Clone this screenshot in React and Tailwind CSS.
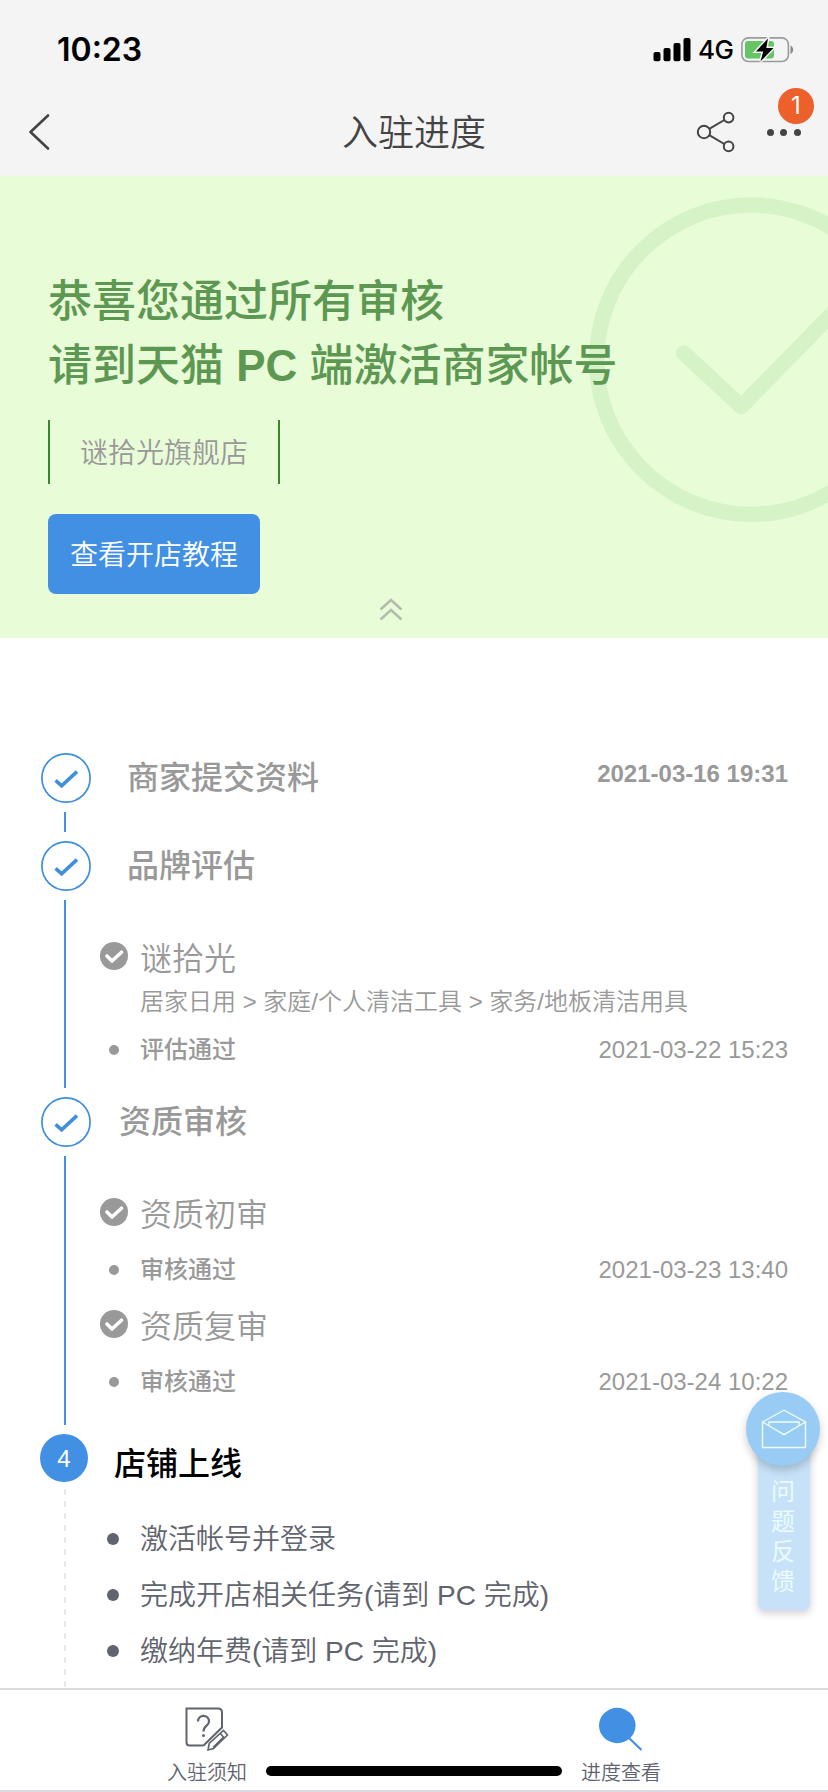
import React from 'react';

const TODO_ITEMS = ['激活帐号并登录', '完成开店相关任务(请到 PC 完成)', '缴纳年费(请到 PC 完成)'];

function StatusBar() {
    return (
        <div className="flex h-[88px] items-center justify-between pl-[57px] pr-[33px] text-black font-['Inter',sans-serif]">
            <span className="mt-[12px] text-[32px] font-semibold leading-none">10:23</span>
            <div className="mt-[11px] flex items-center">
                <svg width="38" height="24" viewBox="0 0 38 24">
                    <rect x="0.500" y="14" width="7" height="9.3" rx="2" />
                    <rect x="10.500" y="10" width="7" height="13.3" rx="2" />
                    <rect x="20.500" y="5" width="7" height="18.3" rx="2" />
                    <rect x="30.500" y="0" width="7" height="23.3" rx="2" />
                </svg>
                <span className="ml-[7px] w-[36px] text-[26px] font-medium leading-none tracking-[-0.5px]">4G</span>
                <svg className="ml-[7px]" width="54" height="26" viewBox="0 0 54 26">
                    <rect x="0.9" y="0.9" width="46.5" height="23.6" rx="6.5" fill="none" stroke="#9b9b9b" strokeWidth="1.6" />
                    <path d="M49.5 8.5c3.6 1.6 3.6 7 0 8.600z" fill="#8a8a8a" />
                    <rect x="4" y="4" width="29" height="17.400" rx="3" fill="#65c466" />
                    <path d="M27 1.500 15 14.500h7.200L19.500 24.500 32.500 11h-7.200z" fill="#000" stroke="#f4f4f4" strokeWidth="3" paintOrder="stroke" />
                </svg>
            </div>
        </div>
    );
}

function NavBar() {
    return (
        <div className="relative flex h-[88px] items-center justify-center">
            <svg className="absolute left-[28px] top-[25px]" width="24" height="38" viewBox="0 0 24 38" fill="none" stroke="#444" strokeWidth="2.6" strokeLinecap="round" strokeLinejoin="round">
                <path d="M20 2.500 2.500 19 20 35.500" />
            </svg>
            <h1 className="pt-[3px] text-[36px] font-[350] leading-none text-[#444]">入驻进度</h1>
            <svg className="absolute right-[89px] top-[22px]" width="44" height="44" viewBox="0 0 44 44" fill="none" stroke="#444" strokeWidth="2">
                <circle cx="9" cy="22" r="6.200" />
                <circle cx="33.600" cy="7.600" r="4.800" />
                <circle cx="33.600" cy="36.400" r="4.800" />
                <path d="M14.300 18.800 29.300 10M14.300 25.200 29.300 34" />
            </svg>
            <div className="absolute right-[27px] top-[41px] flex gap-[6.400px]">
                <span className="size-[7.200px] rounded-full bg-[#444]" />
                <span className="size-[7.200px] rounded-full bg-[#444]" />
                <span className="size-[7.200px] rounded-full bg-[#444]" />
            </div>
            <span className="absolute right-[14px] top-0 flex size-[36px] items-center justify-center rounded-full bg-[#ed5f2b] text-[24px] leading-none text-white font-['Inter',sans-serif]">1</span>
        </div>
    );
}

function Banner() {
    return (
        <section className="relative h-[462px] overflow-hidden bg-[#e9fcd8] pl-[48px] pt-[94px]">
            <svg className="absolute left-[580px] top-0" width="248" height="360" viewBox="580 176 248 360" fill="none" stroke="#d6f3c7" strokeWidth="15.500" strokeLinecap="round" strokeLinejoin="round">
                <circle cx="751.300" cy="359.700" r="154.600" />
                <path d="M683.700 353 741.300 406.500 840 305.500" />
            </svg>
            <h2 className="relative text-[44px] font-medium leading-[64px] text-[#5d9853]">
                恭喜您通过所有审核
                <br />
                请到天猫 <b>PC</b> 端激活商家帐号
            </h2>
            <div className="mt-[22px] flex h-[64px] w-[232px] items-center justify-center border-x-2 border-[#3c852f] pt-[4px] text-[28px] font-[350] leading-none text-[#999]">
                谜拾光旗舰店
            </div>
            <button className="mt-[30px] flex h-[80px] w-[212px] items-center justify-center rounded-[8px] bg-[#4190e4] pt-[4px] text-[28px] font-[350] leading-none text-white">
                查看开店教程
            </button>
            <svg className="absolute left-[379px] top-[422px]" width="24" height="24" viewBox="0 0 24 24" fill="none" stroke="#b5bcad" strokeWidth="2.600">
                <path d="M1.500 11.500 12 2l10.500 9.500M1.500 21.500 12 12l10.500 9.500" />
            </svg>
        </section>
    );
}

function DoneMark() {
    return (
        <svg className="block shrink-0" width="50" height="50" viewBox="0 0 50 50" fill="none" stroke="#3f8fdc">
            <circle cx="25" cy="25" r="24.100" strokeWidth="1.700" />
            <path d="M14.600 27.400 20.600 32.800 36 18.600" strokeWidth="3.600" />
        </svg>
    );
}

// one timeline row: rail with marker + connector on the left, content on the right
function Step({ className, marker, line, title, titleClass, date, children }) {
    return (
        <div className={`flex ${className}`}>
            <div className="flex w-[50px] shrink-0 flex-col">
                {marker}
                {line}
            </div>
            <div className="min-w-0 flex-1">
                <div className="flex h-[48px] items-center justify-between">
                    <h3 className={`text-[32px] font-medium leading-none ${titleClass}`}>{title}</h3>
                    {date && <span className="mb-[6px] text-[24px] font-bold leading-none text-[#999]">{date}</span>}
                </div>
                {children}
            </div>
        </div>
    );
}

function SubTitle({ children }) {
    return (
        <div className="flex h-[36px] items-center">
            <svg className="mb-[7px] ml-[9px] mr-[12px] block" width="28" height="28" viewBox="0 0 28 28">
                <circle cx="14" cy="14" r="14" fill="#999" />
                <path d="M7 14 12 19 21.500 10.200" fill="none" stroke="#fff" strokeWidth="3.600" strokeLinecap="round" strokeLinejoin="round" />
            </svg>
            <span className="text-[32px] font-[350] leading-none text-[#999]">{children}</span>
        </div>
    );
}

function ResultRow({ label, date }) {
    return (
        <div className="flex h-[32px] items-center text-[24px] leading-none text-[#999]">
            <span className="ml-[18px] mr-[21px] size-[10px] rounded-full bg-[#999]" />
            <span className="font-medium">{label}</span>
            <span className="ml-auto">{date}</span>
        </div>
    );
}

const blueLine = <div className="my-[9px] ml-[23px] w-[2px] flex-1 bg-[#4190e4]" />;

function Timeline() {
    return (
        <section className="h-[1050px] overflow-hidden pl-[41px] pr-[40px] pt-[115px]">
            <Step className="h-[88px]" marker={<DoneMark />} line={blueLine} title="商家提交资料" titleClass="pl-[36px] pt-[2px] text-[#999]" date="2021-03-16 19:31" />
            <Step className="h-[256px]" marker={<DoneMark />} line={blueLine} title="品牌评估" titleClass="pl-[36px] pt-[2px] text-[#999]">
                <div className="mt-[52px]">
                    <SubTitle>谜拾光</SubTitle>
                </div>
                <p className="mt-[9px] pl-[49px] text-[24px] font-[350] leading-[32px] text-[#999]">
                    居家日用 &gt; 家庭/个人清洁工具 &gt; 家务/地板清洁用具
                </p>
                <div className="mt-[16px]">
                    <ResultRow label="评估通过" date="2021-03-22 15:23" />
                </div>
            </Step>
            <Step className="h-[337px]" marker={<DoneMark />} line={blueLine} title="资质审核" titleClass="pl-[28px] pt-[2px] text-[#999]">
                <div className="mt-[52px] flex flex-col gap-[22px]">
                    <SubTitle>资质初审</SubTitle>
                    <div className="-mt-px mb-px">
                        <ResultRow label="审核通过" date="2021-03-23 13:40" />
                    </div>
                    <SubTitle>资质复审</SubTitle>
                    <div className="-mt-px">
                        <ResultRow label="审核通过" date="2021-03-24 10:22" />
                    </div>
                </div>
            </Step>
            <Step
                className="h-[260px]"
                marker={
                    <span className="-ml-px flex size-[48px] shrink-0 items-center justify-center rounded-full bg-[#4190e4] pt-[2px] text-[24px] leading-none text-white">4</span>
                }
                line={
                    <svg className="ml-[23px] mt-[7px]" width="2" height="199">
                        <path d="M1 0V199" stroke="#e9e9e9" strokeWidth="2" strokeDasharray="6 6" />
                    </svg>
                }
                title="店铺上线"
                titleClass="pl-[23px] pt-[12px] text-black"
            >
                <ul className="mt-[29px]">
                    {TODO_ITEMS.map((item) => (
                        <li key={item} className="flex h-[56px] items-center pl-[16px] text-[28px] font-[350] leading-none text-[#5f646e]">
                            <span className="mr-[21px] size-[12px] rounded-full bg-[#5f646e]" />
                            <span className="pt-[2px]">{item}</span>
                        </li>
                    ))}
                </ul>
            </Step>
        </section>
    );
}

// floating side widget
function Feedback() {
    return (
        <div className="absolute left-[746px] top-[1392px] flex w-[74px] flex-col items-center">
            <div className="z-10 flex size-[74px] items-center justify-center rounded-full bg-[#98ccf4] pl-[2px] shadow-[0_4px_8px_rgba(0,0,0,0.2)]">
                <svg width="46" height="42" viewBox="0 0 46 42" fill="none" stroke="#eefcff" strokeWidth="1.400">
                    <path d="M1.500 14 23 2.200 44.500 14V39.500H1.500z" />
                    <path d="M1.500 14 23 26.600 44.500 14" />
                    <path d="M8 18V14H38V18" />
                </svg>
            </div>
            <div className="-mt-[37px] ml-[2px] flex h-[181px] w-[52px] flex-col items-center rounded-[6px] bg-[#c7e1f8] pr-[2px] pt-[48px] text-[24px] leading-[30px] text-[#eafcff] shadow-[0_3px_8px_rgba(0,0,0,0.2)]">
                <span>问</span>
                <span>题</span>
                <span>反</span>
                <span>馈</span>
            </div>
        </div>
    );
}

function TabBar() {
    return (
        <nav className="relative flex h-[104px] border-y-2 border-[#dadae2] text-[20px] font-[350] leading-none text-[#5f646e]">
            <div className="flex flex-1 flex-col items-center pt-[16px]">
                <svg width="46" height="46" viewBox="0 0 46 46" fill="none" stroke="#5f646e" strokeWidth="2">
                    <path d="M19.500 39.500H5.500Q2.500 39.500 2.500 36.500V2.500H34Q38 2.500 38 6.500V21.500L19.500 39.500" />
                    <path d="M14 15.500C14 8 25 8 25 15.500 25 20 19.500 19.500 19.500 25.500" strokeWidth="2.200" />
                    <circle cx="19.500" cy="29.600" r="1.500" fill="#5f646e" stroke="none" />
                    <path d="M24 44 25.200 37.500 39.500 24.500 43.500 29 29.500 42.500zM36.300 27.500 40.300 32M29 41.500 40 30.500" strokeWidth="1.600" />
                </svg>
                <span className="mt-[11px]">入驻须知</span>
            </div>
            <div className="flex flex-1 flex-col items-center pt-[16px]">
                <svg width="46" height="46" viewBox="0 0 46 46">
                    <ellipse cx="19.300" cy="19.500" rx="18.300" ry="17.700" fill="#4190e4" />
                    <path d="M31 32 43.500 44" stroke="#4190e4" strokeWidth="2.200" />
                </svg>
                <span className="mt-[11px]">进度查看</span>
            </div>
            <div className="absolute left-[266px] top-[76px] h-[10px] w-[296px] rounded-full bg-black" />
        </nav>
    );
}

export default function App() {
    return (
        <div className="relative h-[1792px] w-[828px] overflow-hidden bg-white font-['Liberation_Sans','Noto_Sans_CJK_SC',sans-serif]">
            <header className="bg-[#f4f4f4]">
                <StatusBar />
                <NavBar />
            </header>
            <Banner />
            <Timeline />
            <TabBar />
            <Feedback />
        </div>
    );
}
